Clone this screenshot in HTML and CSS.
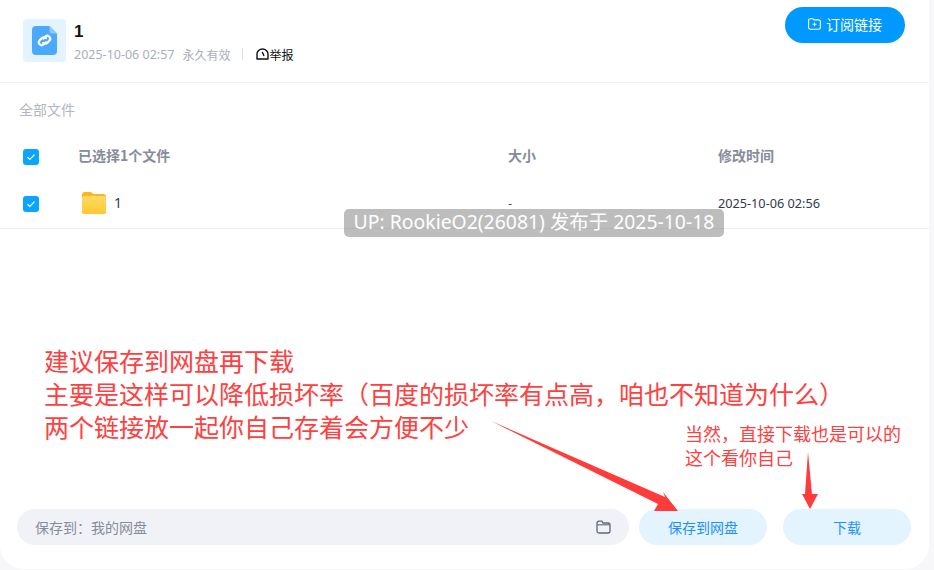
FILE: index.html
```html
<!DOCTYPE html>
<html lang="zh-CN">
<head>
<meta charset="utf-8">
<title>1</title>
<link rel="stylesheet" href="styles.css">
</head>
<body>
<main class="card">
  <header class="head">
    <div class="file-icon">
      <svg width="25" height="29" viewBox="0 0 25 29"><path d="M4 0h13.500L25 7.500V25a4 4 0 0 1-4 4H4a4 4 0 0 1-4-4V4a4 4 0 0 1 4-4z" fill="#4aa9fb"/><path d="M17.500 0L25 7.500h-5a2.500 2.500 0 0 1-2.500-2.500z" fill="#8cc9fd"/><g fill="none" stroke="#fff" stroke-width="2.200" stroke-linecap="round"><path d="M11.500 12.500l1.800-1.800a2.800 2.800 0 0 1 4 4l-2.200 2.200a2.800 2.800 0 0 1-4 0"/><path d="M13.500 16.500l-1.800 1.800a2.800 2.800 0 0 1-4-4l2.200-2.200a2.800 2.800 0 0 1 4 0"/></g></svg>
    </div>
    <div class="info">
      <div class="title">1</div>
      <div class="meta">
        <span class="date">2025-10-06 02:57</span>
        <span class="valid">永久有效</span>
        <span class="sep"></span>
        <span class="report">
          <svg width="13" height="12" viewBox="0 0 13 12"><path d="M1 11V6a5.500 5 0 0 1 11 0v5z" fill="none" stroke="#111" stroke-width="1.400" stroke-linejoin="round"/><path d="M6.500 4.500l1.300 3" stroke="#111" stroke-width="1.400" stroke-linecap="round"/></svg>举报
        </span>
      </div>
    </div>
    <button class="subscribe">
      <svg width="13" height="12" viewBox="0 0 13 12"><path d="M2.300.7h2.600l1.100 1.200h4.700a1.700 1.700 0 0 1 1.700 1.700v6a1.700 1.700 0 0 1-1.700 1.700h-8.400A1.700 1.700 0 0 1 .6 9.600V2.400A1.700 1.700 0 0 1 2.300.7z" fill="none" stroke="#fff" stroke-width="1.100"/><path d="M6.500 4.400v3.800M4.600 6.300h3.800" stroke="#fff" stroke-width="1.100"/></svg>
      订阅链接
    </button>
  </header>

  <div class="crumb">全部文件</div>

  <div class="row row-head">
    <span class="check"><svg width="10" height="8" viewBox="0 0 10 8"><path d="M1.500 4.200l2.300 2.200 4.700-4.800" fill="none" stroke="#fff" stroke-width="1.200"/></svg></span>
    <span class="col-name">已选择1个文件</span>
    <span class="col-size">大小</span>
    <span class="col-time">修改时间</span>
  </div>
  <div class="row row-file">
    <span class="check"><svg width="10" height="8" viewBox="0 0 10 8"><path d="M1.500 4.200l2.300 2.200 4.700-4.800" fill="none" stroke="#fff" stroke-width="1.200"/></svg></span>
    <span class="col-name file-name">
      <svg class="folder" width="24" height="22" viewBox="0 0 24 22"><path d="M3 0h6l2.500 2H21a3 3 0 0 1 3 3v14a3 3 0 0 1-3 3H3a3 3 0 0 1-3-3V3a3 3 0 0 1 3-3z" fill="#ffb51f"/><rect y="4" width="24" height="18" rx="2.500" fill="url(#fold)"/><defs><linearGradient id="fold" x1="0" y1="0" x2="0" y2="1"><stop offset="0" stop-color="#ffda66"/><stop offset="1" stop-color="#ffc832"/></linearGradient></defs></svg>
      <span class="file-label">1</span>
    </span>
    <span class="col-size">-</span>
    <span class="col-time">2025-10-06 02:56</span>
  </div>

  <div class="spacer"></div>

  <footer class="foot">
    <div class="save-path">
      <span>保存到&#xFF1A;我的网盘</span>
      <svg width="15" height="14" viewBox="0 0 15 14"><path d="M1 3.200A2 2 0 0 1 3 1.200h2.800l1.300 1.800H12a2 2 0 0 1 2 2v6a2 2 0 0 1-2 2H3a2 2 0 0 1-2-2z" fill="none" stroke="#5f6878" stroke-width="1.300"/><path d="M1 4.800h13" stroke="#5f6878" stroke-width="1.100"/></svg>
    </div>
    <button class="action action-save">保存到网盘</button>
    <button class="action action-down">下载</button>
  </footer>
</main>

<div class="watermark">UP: RookieO2(26081) 发布于 2025-10-18</div>

<p class="note-main">建议保存到网盘再下载<br>主要是这样可以降低损坏率&#xFF08;百度的损坏率有点高&#xFF0C;咱也不知道为什么&#xFF09;<br>两个链接放一起你自己存着会方便不少</p>
<p class="note-side">当然&#xFF0C;直接下载也是可以的<br>这个看你自己</p>

<svg class="arrows" width="934" height="570" viewBox="0 0 934 570">
  <path d="M491 421L665 497 663 492 678 511 654 511 658 504z" fill="#ff3b3b"/>
  <path d="M808 452L812 494 818 494 810 509 802 494 805 494z" fill="#ff3b3b"/>
</svg>
</body>
</html>
```

FILE: styles.css
```css
* { box-sizing: border-box; }
html, body { margin: 0; height: 100%; }
body {
  position: relative;
  width: 934px;
  height: 570px;
  overflow: hidden;
  background: #f7f7f9;
  font-family: "Noto Sans CJK SC", "Noto Sans", sans-serif;
}
button { font-family: inherit; border: 0; cursor: pointer; }

.card {
  width: 929px;
  height: 569px;
  background: #fff;
  border-radius: 0 0 24px 24px;
  display: flex;
  flex-direction: column;
}

.head {
  height: 83px;
  flex: none;
  border-bottom: 1px solid #f1f1f7;
  display: flex;
  align-items: flex-start;
  padding: 19px 24px 0 23px;
}
.file-icon {
  width: 43px;
  height: 43px;
  border-radius: 4px;
  background: #e3f3ff;
  display: flex;
  align-items: center;
  justify-content: center;
  flex: none;
}
.info { margin-left: 8px; flex: 1; }
.title {
  font: 700 17px/24px "Liberation Sans", sans-serif;
  color: #111;
  margin-top: 1px;
}
.meta {
  display: flex;
  align-items: center;
  height: 20px;
  font-size: 12px;
  color: #a9adbc;
}
.date { font-family: "Noto Sans", sans-serif; font-size: 12.500px; }
.valid { margin-left: 8px; }
.sep { width: 1px; height: 12px; background: #dfe0e6; margin: 0 13px 0 12px; }
.report { display: flex; align-items: center; color: #111; }
.subscribe {
  margin-top: -12px;
  width: 120px;
  height: 36px;
  padding: 0 0 2px;
  border-radius: 18px;
  background: #0099ff;
  color: #fff;
  font-size: 14px;
  display: flex;
  align-items: center;
  justify-content: center;
  gap: 5px;
}

.crumb {
  padding: 17px 0 0 19px;
  height: 52px;
  font-size: 14px;
  line-height: 18px;
  color: #b2b5c2;
  flex: none;
}

.row {
  display: flex;
  align-items: center;
  flex: none;
  padding-left: 23px;
}
.row-head { height: 44px; font-size: 14px; font-weight: 700; color: #878c9c; }
.row-head .col-name, .row-head .col-size, .row-head .col-time { margin-bottom: 5px; }
.row-file { height: 50px; font-size: 12px; color: #333a4d; border-bottom: 1px solid #ececf3; }
.row-file .col-size, .row-file .col-time { margin-bottom: 2px; }
.check {
  width: 16px;
  height: 16px;
  border-radius: 3px;
  background: #0aa5ff;
  display: flex;
  align-items: center;
  justify-content: center;
  flex: none;
}
.col-name { width: 430px; margin-left: 39px; flex: none; }
.col-size { width: 210px; flex: none; }
.col-time { flex: none; }
.row-file .col-time { font-family: "Noto Sans", "Noto Sans CJK SC", sans-serif; font-size: 12.700px; }
.file-name { display: flex; align-items: center; gap: 8px; padding-left: 4px; font-size: 14px; }
.file-label { margin-bottom: 2px; font-family: "Noto Sans", sans-serif; }
.folder { margin-bottom: 1px; }

.spacer { flex: 1; }

.foot {
  display: flex;
  align-items: center;
  padding: 0 18px 24px 17px;
  flex: none;
}
.save-path {
  width: 612px;
  height: 36px;
  border-radius: 18px;
  background: #f1f2f8;
  display: flex;
  align-items: center;
  justify-content: space-between;
  padding: 0 18px 0 18px;
  font-size: 14px;
  color: #878c9c;
}
.action {
  width: 128px;
  height: 36px;
  border-radius: 18px;
  background: #e3f4ff;
  color: #1e90ff;
  font-size: 14px;
}
.action-save { margin-left: 10px; }
.action-down { margin-left: 16px; }

.watermark {
  position: absolute;
  left: 344px;
  top: 209px;
  width: 380px;
  height: 28px;
  border-radius: 5px;
  background: rgba(128, 128, 128, .52);
  color: #fff;
  font: 19.400px/26px "Noto Sans", "Noto Sans CJK SC", sans-serif;
  text-align: center;
  white-space: nowrap;
}
.note-main, .note-side {
  position: absolute;
  margin: 0;
  color: #ff4040;
  white-space: nowrap;
}
.note-main { left: 44px; top: 344px; font-size: 25px; line-height: 33px; }
.note-side { left: 685px; top: 421px; font-size: 18px; line-height: 24px; }
.arrows { position: absolute; left: 0; top: 0; pointer-events: none; }
```
